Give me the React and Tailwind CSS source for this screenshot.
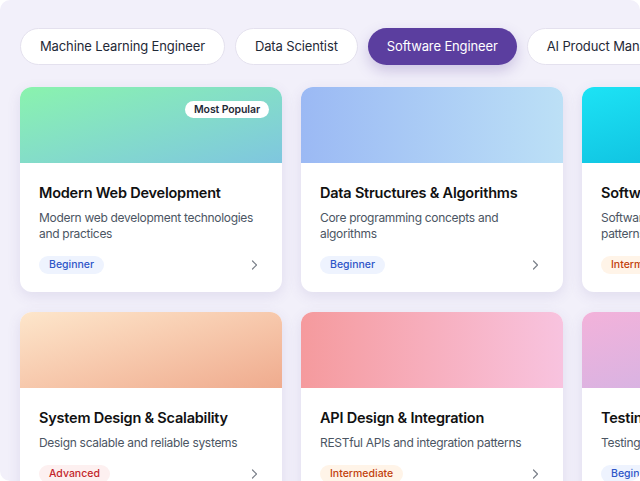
import React from 'react';

const tabs = [
  { label: 'Machine Learning Engineer' },
  { label: 'Data Scientist' },
  { label: 'Software Engineer', active: true },
  { label: 'AI Product Manager' },
];

const levelStyles = {
  Beginner: 'bg-[#eef3fe] text-[#2f56c8]',
  Intermediate: 'bg-[#fff4e8] text-[#c2410c]',
  Advanced: 'bg-[#fdf0f0] text-[#c3262c]',
};

const courses = [
  {
    title: 'Modern Web Development',
    desc: 'Modern web development technologies and practices',
    level: 'Beginner',
    cover: 'bg-gradient-to-br from-[#8af3ad] to-[#7fc6df]',
    popular: true,
  },
  {
    title: 'Data Structures & Algorithms',
    desc: 'Core programming concepts and algorithms',
    level: 'Beginner',
    cover: 'bg-gradient-to-r from-[#9bb9f4] to-[#bce0f6]',
  },
  {
    title: 'Software Architecture',
    desc: 'Software architecture principles and patterns',
    level: 'Intermediate',
    cover: 'bg-gradient-to-br from-[#1de3f5] to-[#09b2d6]',
  },
  {
    title: 'System Design & Scalability',
    desc: 'Design scalable and reliable systems',
    level: 'Advanced',
    cover: 'bg-gradient-to-br from-[#fde6cb] to-[#efab8e]',
  },
  {
    title: 'API Design & Integration',
    desc: 'RESTful APIs and integration patterns',
    level: 'Intermediate',
    cover: 'bg-gradient-to-r from-[#f59a9d] to-[#f8c3df]',
  },
  {
    title: 'Testing & Quality',
    desc: 'Testing strategies and practices',
    level: 'Beginner',
    cover: 'bg-gradient-to-br from-[#f3b2da] to-[#c8b3e7]',
  },
];

const Chevron = () => (
  <svg width="10" height="12" viewBox="0 0 10 12" fill="none" className="text-[#7b808a]">
    <path d="M3.5 2 L7.5 6 L3.5 10" stroke="currentColor" strokeWidth="1.2" strokeLinecap="round" strokeLinejoin="round" />
  </svg>
);

const CourseCard = ({ course }) => (
  <div className="flex flex-col rounded-[12px] bg-white overflow-hidden shadow-[0_4px_14px_rgba(90,70,150,0.12)]">
    <div className={`relative h-[76px] ${course.cover}`}>
      {course.popular && (
        <span className="absolute top-[14px] right-[13px] rounded-full bg-white px-[9px] py-[2px] text-[10.5px] font-semibold leading-[13px] tracking-[-0.01em] text-[#1f2937]">
          Most Popular
        </span>
      )}
    </div>
    <div className="flex flex-col px-[19px] pt-[20px] pb-[18px]">
      <h3 className="text-[14.5px] font-semibold leading-[20px] tracking-[-0.015em] text-[#111111] whitespace-nowrap">{course.title}</h3>
      <p className="mt-[7px] text-[12px] leading-[16px] tracking-[-0.025em] text-[#4b5563]">{course.desc}</p>
      <div className="mt-[14px] flex items-center justify-between">
        <span className={`rounded-full px-[10px] py-[3px] text-[10.5px] font-medium leading-[12px] ${levelStyles[course.level]}`}>
          {course.level}
        </span>
        <span className="mr-[4px]"><Chevron /></span>
      </div>
    </div>
  </div>
);

export default function App() {
  return (
    <div className="w-[640px] h-[481px] bg-white overflow-hidden">
      <div
        className="w-full h-full overflow-hidden rounded-[10px] bg-[#f2f0fa] pl-[20px] pt-[28px]"
        style={{ fontFamily: 'Inter, "Noto Sans", sans-serif' }}
      >
        <div className="flex gap-[10px] whitespace-nowrap">
          {tabs.map((t) => (
            <button
              key={t.label}
              className={
                t.active
                  ? 'h-[37px] shrink-0 rounded-full bg-[#5b3e9f] px-[19px] text-[13px] tracking-[-0.01em] text-white shadow-[0_6px_14px_rgba(91,62,159,0.25)]'
                  : 'h-[37px] shrink-0 rounded-full border border-[#e4e1ee] bg-white px-[19px] text-[13px] tracking-[-0.01em] text-[#1f2937]'
              }
            >
              {t.label}
            </button>
          ))}
        </div>
        <div className="mt-[22px] grid grid-cols-[262px_262px_262px] gap-x-[19px] gap-y-[20px]">
          {courses.map((c) => (
            <CourseCard key={c.title} course={c} />
          ))}
        </div>
      </div>
    </div>
  );
}
